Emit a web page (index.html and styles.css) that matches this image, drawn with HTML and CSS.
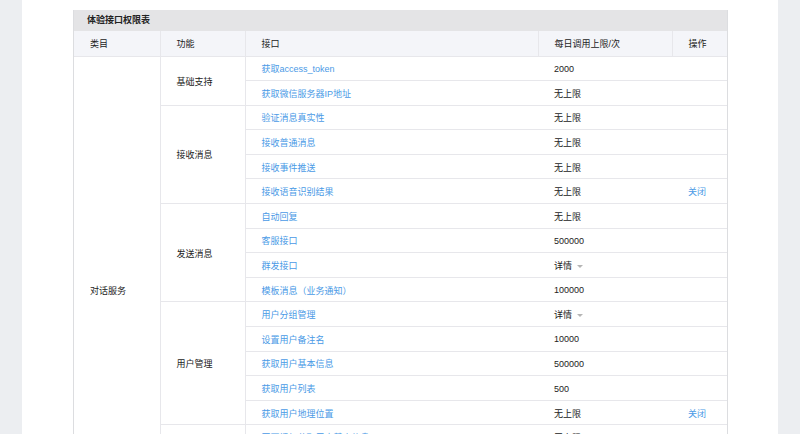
FILE: index.html
```html
<!DOCTYPE html>
<html lang="zh">
<head>
<meta charset="utf-8">
<title>体验接口权限表</title>
<link rel="stylesheet" href="styles.css">
</head>
<body>
<div class="page">
  <div class="panel">
    <div class="box">
      <div class="box-title">体验接口权限表</div>
      <table class="perm">
        <colgroup>
          <col class="c1"><col class="c2"><col class="c3"><col class="c4"><col class="c5">
        </colgroup>
        <thead>
          <tr><th>类目</th><th>功能</th><th>接口</th><th>每日调用上限/次</th><th class="op">操作</th></tr>
        </thead>
        <tbody>
          <tr><td rowspan="19">对话服务</td><td rowspan="2">基础支持</td><td><a>获取access_token</a></td><td class="lim">2000</td><td class="op"></td></tr>
          <tr><td><a>获取微信服务器IP地址</a></td><td class="lim">无上限</td><td class="op"></td></tr>
          <tr><td rowspan="4">接收消息</td><td><a>验证消息真实性</a></td><td class="lim">无上限</td><td class="op"></td></tr>
          <tr><td><a>接收普通消息</a></td><td class="lim">无上限</td><td class="op"></td></tr>
          <tr><td><a>接收事件推送</a></td><td class="lim">无上限</td><td class="op"></td></tr>
          <tr><td><a>接收语音识别结果</a></td><td class="lim">无上限</td><td class="op"><a>关闭</a></td></tr>
          <tr><td rowspan="4">发送消息</td><td><a>自动回复</a></td><td class="lim">无上限</td><td class="op"></td></tr>
          <tr><td><a>客服接口</a></td><td class="lim">500000</td><td class="op"></td></tr>
          <tr><td><a>群发接口</a></td><td class="lim">详情<span class="caret"></span></td><td class="op"></td></tr>
          <tr><td><a>模板消息（业务通知）</a></td><td class="lim">100000</td><td class="op"></td></tr>
          <tr><td rowspan="5">用户管理</td><td><a>用户分组管理</a></td><td class="lim">详情<span class="caret"></span></td><td class="op"></td></tr>
          <tr><td><a>设置用户备注名</a></td><td class="lim">10000</td><td class="op"></td></tr>
          <tr><td><a>获取用户基本信息</a></td><td class="lim">500000</td><td class="op"></td></tr>
          <tr><td><a>获取用户列表</a></td><td class="lim">500</td><td class="op"></td></tr>
          <tr><td><a>获取用户地理位置</a></td><td class="lim">无上限</td><td class="op"><a>关闭</a></td></tr>
          <tr><td rowspan="4">推广支持</td><td><a>网页授权获取用户基本信息</a></td><td class="lim">无上限</td><td class="op"></td></tr>
          <tr><td><a>生成带参数的二维码</a></td><td class="lim">100000</td><td class="op"></td></tr>
          <tr><td><a>长链接转短链接接口</a></td><td class="lim">1000</td><td class="op"></td></tr>
          <tr><td><a>获取客服聊天记录</a></td><td class="lim">无上限</td><td class="op"></td></tr>
        </tbody>
      </table>
    </div>
  </div>
</div>
</body>
</html>
```

FILE: styles.css
```css
html, body {
  margin: 0;
  padding: 0;
}
body {
  background: #eceef1;
  font-family: "Liberation Sans", Arial, "Noto Sans CJK SC", sans-serif;
  font-size: 9px;
  color: #222;
}
.page {
  padding: 0 22px;
}
.panel {
  background: #fff;
  padding: 10px 50px 40px 51px;
  min-height: 600px;
}
.box {
  border: 1px solid #dcdde0;
  border-top: none;
}
.box-title {
  background: #e4e4e6;
  height: 21px;
  line-height: 21px;
  padding-left: 13px;
  font-weight: bold;
  color: #222;
}
.perm {
  width: 100%;
  border-collapse: collapse;
  table-layout: fixed;
}
.c1 { width: 86px; }
.c2 { width: 85px; }
.c3 { width: 293px; }
.c4 { width: 134px; }
.c5 { width: auto; }
.perm th, .perm td {
  border: 1px solid #e7e7eb;
  height: 24.6px;
  box-sizing: border-box;
  padding: 1px 0 0 16px;
  text-align: left;
  font-weight: normal;
  vertical-align: middle;
  white-space: nowrap;
}
.perm thead th {
  background: #f4f5f9;
  height: 25px;
  border-top: none;
}
.perm tr > :first-child { border-left: none; }
.perm tr > :last-child { border-right: none; }
.perm tbody td.lim,
.perm tbody td.op {
  border-left-style: hidden;
}
.perm a {
  color: #4a9ae6;
  text-decoration: none;
}
.caret {
  display: inline-block;
  width: 0;
  height: 0;
  margin-left: 5px;
  vertical-align: middle;
  border-left: 3px solid transparent;
  border-right: 3px solid transparent;
  border-top: 3px solid #b5b5b5;
}
```
